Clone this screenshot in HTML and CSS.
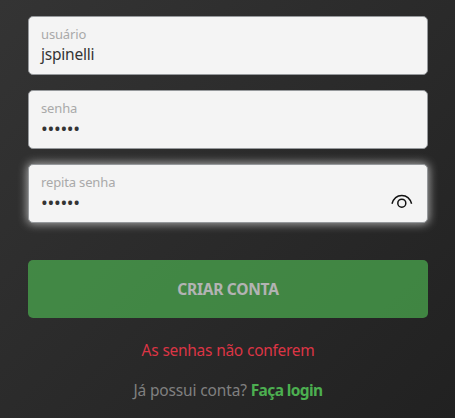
FILE: index.html
```html
<!DOCTYPE html>
<html lang="pt-BR">
<head>
<meta charset="utf-8">
<title>Criar conta</title>
<link rel="stylesheet" href="styles.css">
</head>
<body>
<form class="form">
  <div class="field">
    <div class="field-text"><span class="label">usuário</span><span class="value">jspinelli</span></div>
  </div>
  <div class="field">
    <div class="field-text"><span class="label">senha</span><span class="value dots">••••••</span></div>
  </div>
  <div class="field focused">
    <div class="field-text"><span class="label">repita senha</span><span class="value dots">••••••</span></div>
    <svg class="eye" viewBox="0 0 22 16" fill="none" stroke="#111" stroke-width="1.5">
      <path d="M1 9.7C2.5 4.5 6.2 1.4 10.8 1.4S19.1 4.5 20.6 9.7"/>
      <circle cx="10.8" cy="9.2" r="4"/>
    </svg>
  </div>
  <button class="submit" type="button" disabled>CRIAR CONTA</button>
  <p class="error">As senhas não conferem</p>
  <p class="login">Já possui conta? <a class="link">Faça login</a></p>
</form>
</body>
</html>
```
FILE: styles.css
```css
* { box-sizing: border-box; }
body {
  margin: 0;
  height: 418px;
  overflow: hidden;
  background: linear-gradient(135deg, #343434 0%, #212121 100%);
  font-family: "Noto Sans", sans-serif;
  font-size: 15.5px;
}
.form {
  width: 400px;
  margin-left: 28px;
  padding-top: 16.4px;
  display: flex;
  flex-direction: column;
}
.field {
  height: 58.2px;
  margin-bottom: 15.8px;
  padding: 7px 14px 0 12px;
  border: 1px solid #96999c;
  border-radius: 5px;
  background: #f4f4f4;
  display: flex;
  justify-content: space-between;
}
.focused { box-shadow: 0 0 10px 1px #aaa; }
.field-text { display: flex; flex-direction: column; }
.label {
  font-size: 13px;
  line-height: 20px;
  letter-spacing: -0.15px;
  color: #a9a9a9;
}
.value {
  line-height: 21px;
  letter-spacing: -0.22px;
  color: #343434;
}
.dots {
  font-size: 18px;
  line-height: 20px;
  letter-spacing: -0.3px;
}
.eye {
  width: 22px;
  height: 16px;
  margin-top: 21.6px;
}
.submit {
  height: 58px;
  margin: 21.7px 0 0;
  padding: 0;
  border: 0;
  border-radius: 5px;
  background: #4caf50;
  opacity: .7;
  color: #eee;
  font: 700 15.5px/58px "Noto Sans", sans-serif;
  letter-spacing: -0.25px;
}
.error, .login {
  margin: 0;
  line-height: 20px;
  text-align: center;
}
.error {
  margin-top: 22px;
  letter-spacing: -0.3px;
  word-spacing: 0.4px;
  color: #dc3545;
}
.login {
  margin-top: 20px;
  letter-spacing: -0.15px;
  color: #808080;
}
.link {
  color: #4caf50;
  font-weight: 700;
  letter-spacing: -0.6px;
}
```
